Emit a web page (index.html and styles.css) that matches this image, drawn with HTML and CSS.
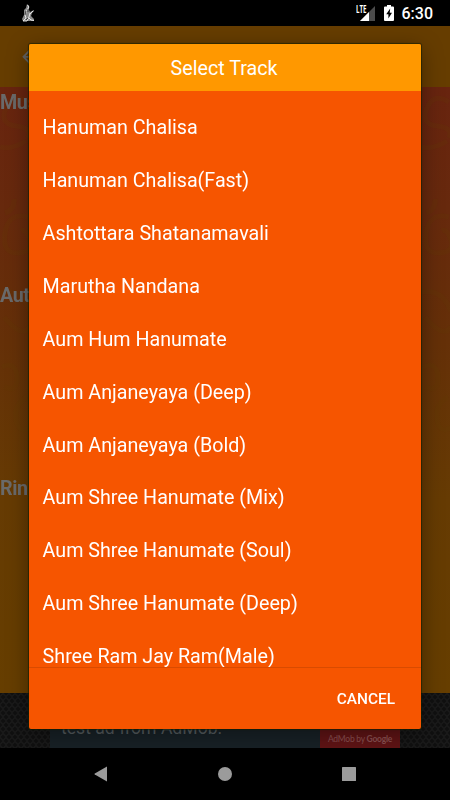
FILE: index.html
```html
<!DOCTYPE html>
<html lang="en">
<head>
    <meta charset="UTF-8">
    <meta name="viewport" content="width=device-width, initial-scale=1.0">
    <title>Select Track</title>
    <link rel="stylesheet" href="styles.css">
</head>
<body>
    <!-- Status bar -->
    <div class="status-bar">
        <svg class="hanuman" width="14" height="20" viewBox="0 0 14 20">
            <path d="M6 1l2 2v4l1 2 2-1 2-1v1l-2 2-1 3 3 3v2H2l-1-2 2-4V7l2-2z" fill="#8a8a8a"/>
            <path d="M6.500 2L8 4 6 7l-2 5 1 3-3 3h4l2-4 1-4M8 15l2 2 3 .500M9 11l3-3" fill="none" stroke="#eee" stroke-width=".9"/>
            <path d="M5 8l-1 4M7 6v3M7 15l-2 2" fill="none" stroke="#333" stroke-width=".9"/>
        </svg>
        <div class="status-right">
            <span class="lte">LTE</span>
            <svg class="signal" width="15" height="15" viewBox="0 0 15 15">
                <path d="M0 15L15 0v15z" fill="#4c4c4c"/>
                <path d="M0 15L9 6v9z" fill="#fff"/>
            </svg>
            <svg class="battery" width="10" height="16" viewBox="0 0 10 16">
                <path d="M3 0h4v1.500h2q1 0 1 1V15q0 1-1 1H1q-1 0-1-1V2.500q0-1 1-1h2z" fill="#fff"/>
                <path d="M6.200 3.500L2.200 9.300h2.200v4.200L8 7.800H5.700z" fill="#000"/>
            </svg>
            <span class="clock">6:30</span>
        </div>
    </div>

    <!-- Screen behind the dialog -->
    <div class="app-bar">
        <svg width="18" height="18" viewBox="0 0 18 18">
            <path d="M8.500 2.500L2.500 8.800l6 6.200M3 8.800h14" fill="none" stroke="#626262" stroke-width="1.800"/>
        </svg>
    </div>
    <div class="settings">
        <svg class="pattern" width="450" height="606" viewBox="0 0 450 606">
            <g fill="none" stroke="#643d08" stroke-width="5" opacity=".2">
                <path id="swirl" d="M28 15q-15-10-22 6t10 18 12 12M0 60q12 3 26-6M28 130q-20-5-23 16t13 20 12-13-9-9M5 126q10-3 9-14M0 205q22-4 30 20M4 230q18 22 26 10M2 280q14-6 15 10t-13 10M27 310q-13 7-11 22t14 9"/>
                <use href="#swirl" x="421"/>
            </g>
        </svg>
        <h2>Mus</h2>
        <h2>Aut</h2>
        <h2>Rin</h2>
    </div>
    <div class="ad-area">
        <div class="ad">
            <p>test ad from AdMob.</p>
            <div class="ad-logo">AdMob by <b>Google</b></div>
        </div>
    </div>

    <!-- Navigation bar -->
    <div class="nav-bar">
        <svg width="14" height="16" viewBox="0 0 14 16"><path d="M13 .500v15L.800 8.500q-.800-.500 0-1z" fill="#9b9b9b"/></svg>
        <svg width="14" height="14" viewBox="0 0 14 14"><circle cx="7" cy="7" r="7" fill="#9b9b9b"/></svg>
        <svg width="14" height="14" viewBox="0 0 14 14"><rect width="14" height="14" rx=".500" fill="#9b9b9b"/></svg>
    </div>

    <!-- Track dialog -->
    <div class="dialog">
        <div class="dialog-title">Select Track</div>
        <ul class="tracks">
            <li>Hanuman Chalisa</li>
            <li>Hanuman Chalisa(Fast)</li>
            <li>Ashtottara Shatanamavali</li>
            <li>Marutha Nandana</li>
            <li>Aum Hum Hanumate</li>
            <li>Aum Anjaneyaya (Deep)</li>
            <li>Aum Anjaneyaya (Bold)</li>
            <li>Aum Shree Hanumate (Mix)</li>
            <li>Aum Shree Hanumate (Soul)</li>
            <li>Aum Shree Hanumate (Deep)</li>
            <li>Shree Ram Jay Ram(Male)</li>
        </ul>
        <div class="dialog-footer">
            <button class="cancel">CANCEL</button>
        </div>
    </div>
</body>
</html>
```
FILE: styles.css
```css
* {
    margin: 0;
    padding: 0;
    box-sizing: border-box;
}

body {
    font-family: Roboto, sans-serif;
    width: 450px;
    height: 800px;
    background: #000;
    display: flex;
    flex-direction: column;
    position: relative;
    overflow: hidden;
}

/* Status bar */
.status-bar {
    height: 26px;
    flex: none;
    display: flex;
    justify-content: space-between;
    padding: 3px 17px 0 21px;
    color: #fff;
}

.status-right {
    display: flex;
}

.lte {
    font-family: "Open Sans", Roboto, sans-serif;
    font-size: 10px;
    font-weight: 700;
    line-height: 10px;
    width: 4px;
    padding-top: 1px;
    transform: scaleX(.62);
    transform-origin: left;
}

.signal {
    margin-top: 3px;
}

.battery {
    margin: 2px 8px 0 9px;
}

.clock {
    font-size: 16px;
    font-weight: 500;
    line-height: 22px;
}

/* Dimmed screen */
.app-bar {
    height: 61px;
    flex: none;
    background: #663d00;
    padding: 22px 0 0 21px;
}

.settings {
    height: 606px;
    flex: none;
    position: relative;
    background: linear-gradient(#68240f, #67290d 20%, #653008 42%, #663b03 68%, #663e00);
}

.settings h2 {
    height: 193px;
    font-size: 19.7px;
    font-weight: 700;
    line-height: 31px;
    letter-spacing: -.4px;
    color: #6a6a6a;
    position: relative;
}

.pattern {
    position: absolute;
    left: 0;
    top: 0;
}

/* Ad banner */
.ad-area {
    height: 55px;
    flex: none;
    display: flex;
    justify-content: center;
    background-color: #191919;
    background-image: radial-gradient(circle, #101010 1.5px, transparent 2px), radial-gradient(circle, #101010 1.5px, transparent 2px);
    background-size: 6px 8px;
    background-position: 0 0, 3px 4px;
}

.ad {
    width: 350px;
    background: #182126;
    display: flex;
    justify-content: space-between;
    align-items: flex-end;
}

.ad p {
    font-size: 17.6px;
    line-height: 22px;
    padding: 0 0 9px 11px;
    color: #555b5e;
}

.ad-logo {
    width: 80px;
    height: 19px;
    background: #601415;
    color: #8a5051;
    font-family: Lato, sans-serif;
    font-size: 8.5px;
    line-height: 20px;
    text-align: center;
    letter-spacing: -.25px;
    white-space: nowrap;
}

/* Navigation bar */
.nav-bar {
    height: 52px;
    flex: none;
    display: flex;
    justify-content: space-between;
    align-items: center;
    padding: 0 94px;
}

/* Dialog */
.dialog {
    position: absolute;
    left: 29px;
    top: 44px;
    width: 392px;
    height: 685px;
    background: #f65500;
    color: #fff;
    border-radius: 2px;
    overflow: hidden;
    display: flex;
    flex-direction: column;
    box-shadow: 0 0 1px 1px rgba(20, 30, 0, .65), 0 5px 22px rgba(0, 0, 0, .38);
}

.dialog-title {
    height: 47px;
    flex: none;
    background: #ff9800;
    font-size: 19.7px;
    line-height: 50px;
    text-align: center;
    padding-right: 2px;
}

.tracks {
    flex: 1;
    min-height: 0;
    overflow: hidden;
    list-style: none;
    padding: 10px 14px 0 13.6px;
    border-bottom: 1px solid #d94b00;
}

.tracks li {
    height: 52.93px;
    font-size: 19.7px;
    line-height: 53px;
}

.dialog-footer {
    height: 61px;
    flex: none;
    display: flex;
    justify-content: flex-end;
    align-items: center;
    padding: 0 26px 0 0;
}

.cancel {
    border: none;
    background: none;
    color: #fff;
    font-family: inherit;
    font-size: 15.4px;
    font-weight: 500;
}
```
